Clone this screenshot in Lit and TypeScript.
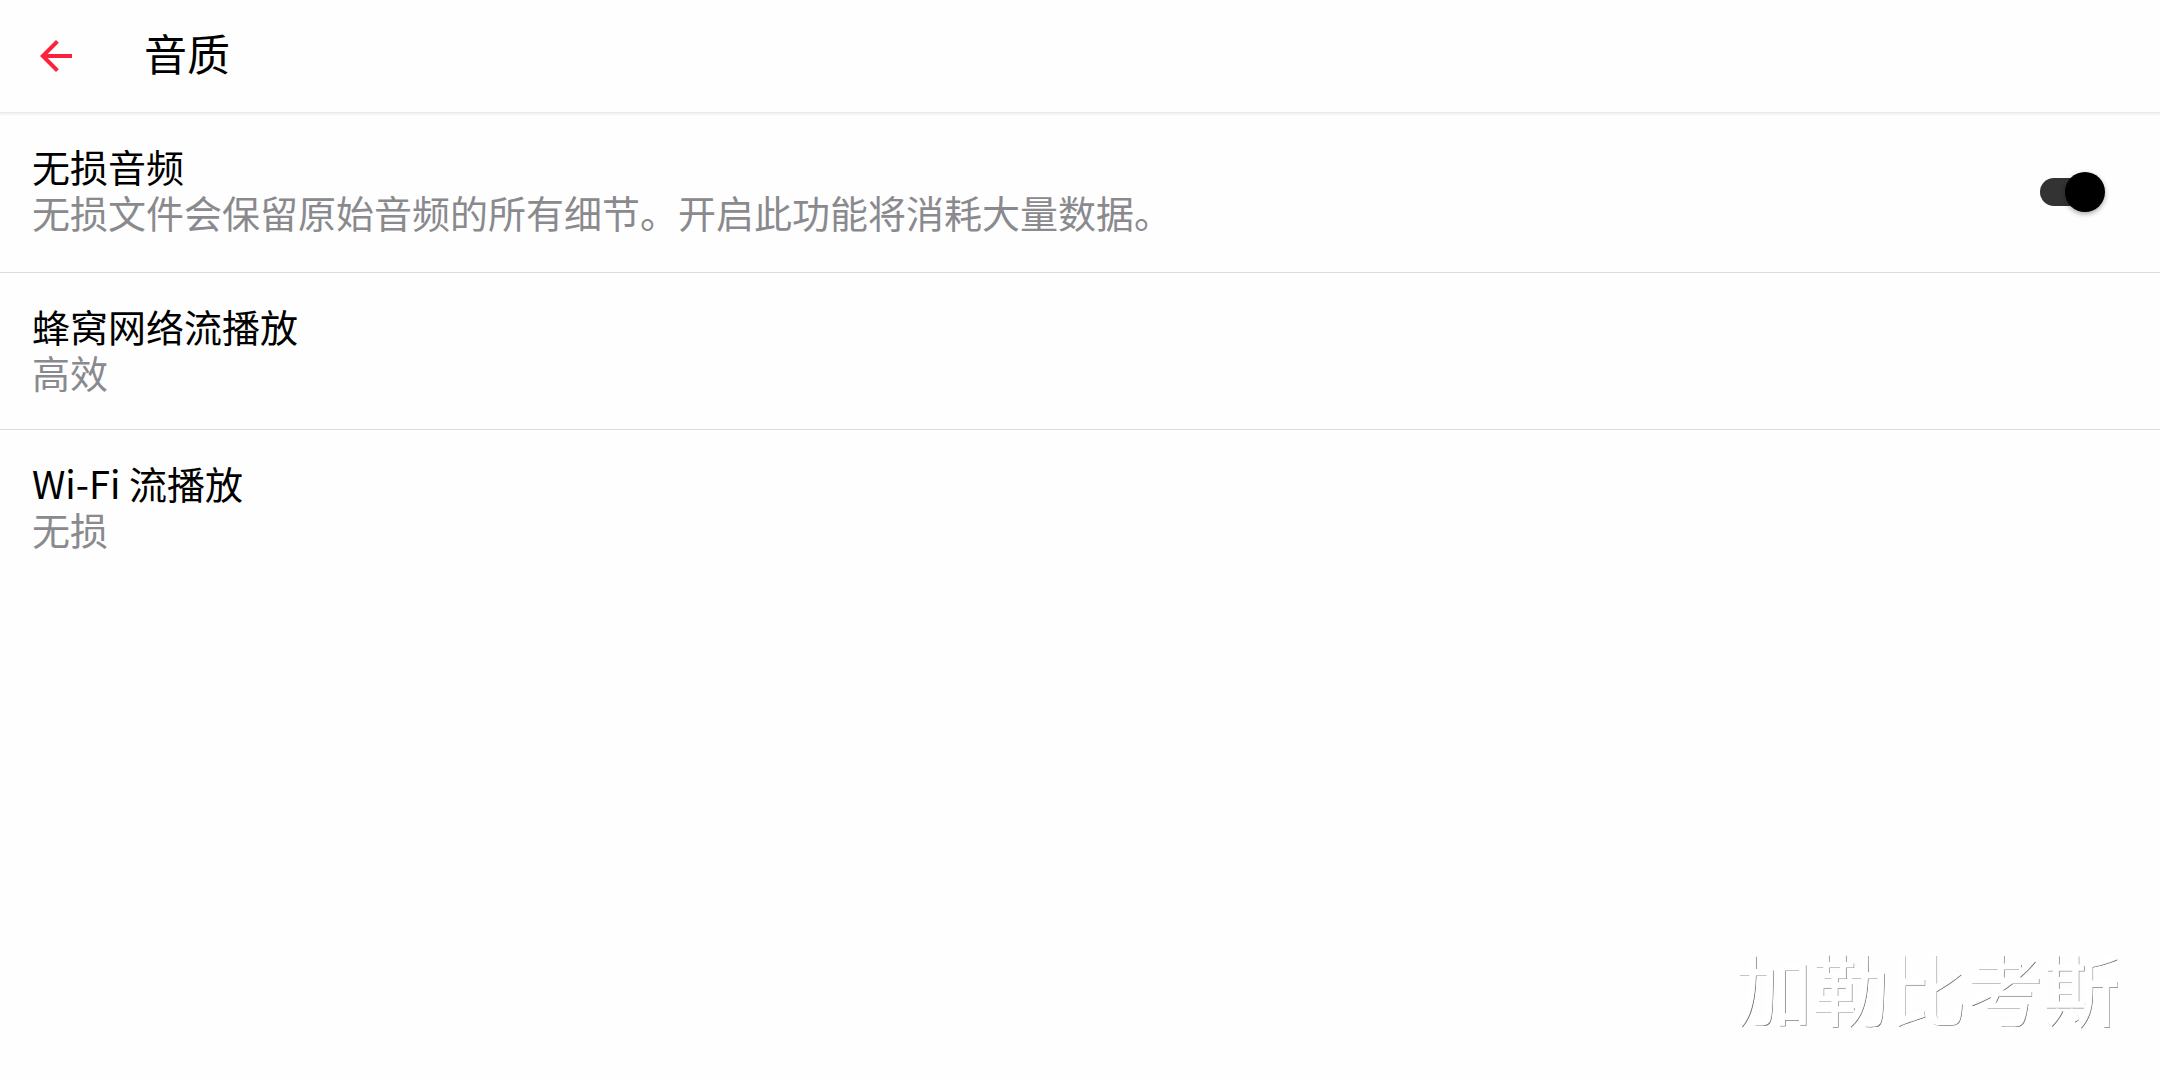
import { LitElement, html, css, nothing } from "lit";
import { customElement, property, state } from "lit/decorators.js";

@customElement("toggle-switch")
class ToggleSwitch extends LitElement {
  @property() label = "";
  @property({ type: Boolean }) checked = false;

  static styles = css`
    :host {
      display: block;
      padding-bottom: 1px;
    }
    .switch {
      appearance: none;
      display: grid;
      align-items: center;
      width: 65px;
      height: 40px;
      margin: 0;
      cursor: pointer;
    }
    .switch::before,
    .switch::after {
      content: "";
      grid-area: 1 / 1;
    }
    .switch::before {
      width: 60px;
      height: 28px;
      border-radius: 14px;
      background: #b9b9b9;
    }
    .switch::after {
      width: 40px;
      height: 40px;
      border-radius: 50%;
      background: #fff;
      box-shadow: 0 2px 5px rgba(0, 0, 0, 0.35);
    }
    .switch:checked::before {
      background: #333;
    }
    .switch:checked::after {
      justify-self: end;
      background: #000;
    }
  `;

  render() {
    return html`<input
      class="switch"
      type="checkbox"
      role="switch"
      aria-label=${this.label}
      .checked=${this.checked}
    />`;
  }
}

interface Setting {
  title: string;
  detail: string;
  on?: boolean;
}

@customElement("app-root")
class AppRoot extends LitElement {
  @state() private settings: Setting[] = [
    {
      title: "无损音频",
      detail: "无损文件会保留原始音频的所有细节。开启此功能将消耗大量数据。",
      on: true,
    },
    { title: "蜂窝网络流播放", detail: "高效" },
    { title: "Wi-Fi 流播放", detail: "无损" },
  ];

  static styles = css`
    :host {
      display: flex;
      flex-direction: column;
      min-height: 100vh;
      background: #fefefe;
      color: #000;
      font-family: "Noto Sans CJK SC", sans-serif;
    }
    .bar {
      display: flex;
      align-items: center;
      gap: 56px;
      height: 112px;
      padding: 0 24px;
      border-bottom: 1px solid #e9e9e9;
      box-shadow: 0 2px 0 #f5f5f5;
    }
    .back {
      display: grid;
      place-items: center;
      width: 64px;
      height: 64px;
      padding: 0;
      border: 0;
      background: none;
      cursor: pointer;
    }
    .arrow {
      display: block;
      width: 32px;
      height: 32px;
      fill: none;
      stroke: #fa233b;
      stroke-width: 4;
    }
    .heading {
      margin: 0;
      padding-bottom: 8px;
      font-size: 43px;
      line-height: 56px;
      font-weight: 400;
    }
    .list {
      flex: 1;
      margin: 0;
      padding: 0;
      list-style: none;
    }
    .row {
      display: flex;
      align-items: center;
      justify-content: space-between;
      padding: 0 55px 0 32px;
    }
    .row + .row {
      border-top: 1px solid #dcdcdc;
    }
    .text {
      padding: 30px 0 34px;
      font-size: 38px;
      line-height: 46px;
    }
    .row:first-child .text {
      padding-bottom: 37px;
    }
    .title,
    .detail {
      margin: 0;
      font-size: 38px;
      font-weight: 400;
    }
    .detail {
      color: #8a8a8e;
    }
    .watermark {
      position: absolute;
      right: 40px;
      bottom: 37px;
      font-size: 77px;
      line-height: 112px;
      color: #fff;
      -webkit-text-stroke: 1px #fff;
      text-shadow: 1px 1px 0 #777, 1px 1px 0 #999;
      pointer-events: none;
    }
  `;

  render() {
    return html`
      <header class="bar">
        <button class="back" type="button" aria-label="返回">
          <svg class="arrow" viewBox="0 0 32 32" aria-hidden="true">
            <path d="M32 16H4M17.400 1.400L2.800 16L17.400 30.600" />
          </svg>
        </button>
        <h1 class="heading">音质</h1>
      </header>
      <ul class="list">
        ${this.settings.map(
          (s) => html`<li class="row">
            <div class="text">
              <h2 class="title">${s.title}</h2>
              <p class="detail">${s.detail}</p>
            </div>
            ${s.on === undefined
              ? nothing
              : html`<toggle-switch .label=${s.title} .checked=${s.on}></toggle-switch>`}
          </li>`
        )}
      </ul>
      <div class="watermark">加勒比考斯</div>
    `;
  }
}
